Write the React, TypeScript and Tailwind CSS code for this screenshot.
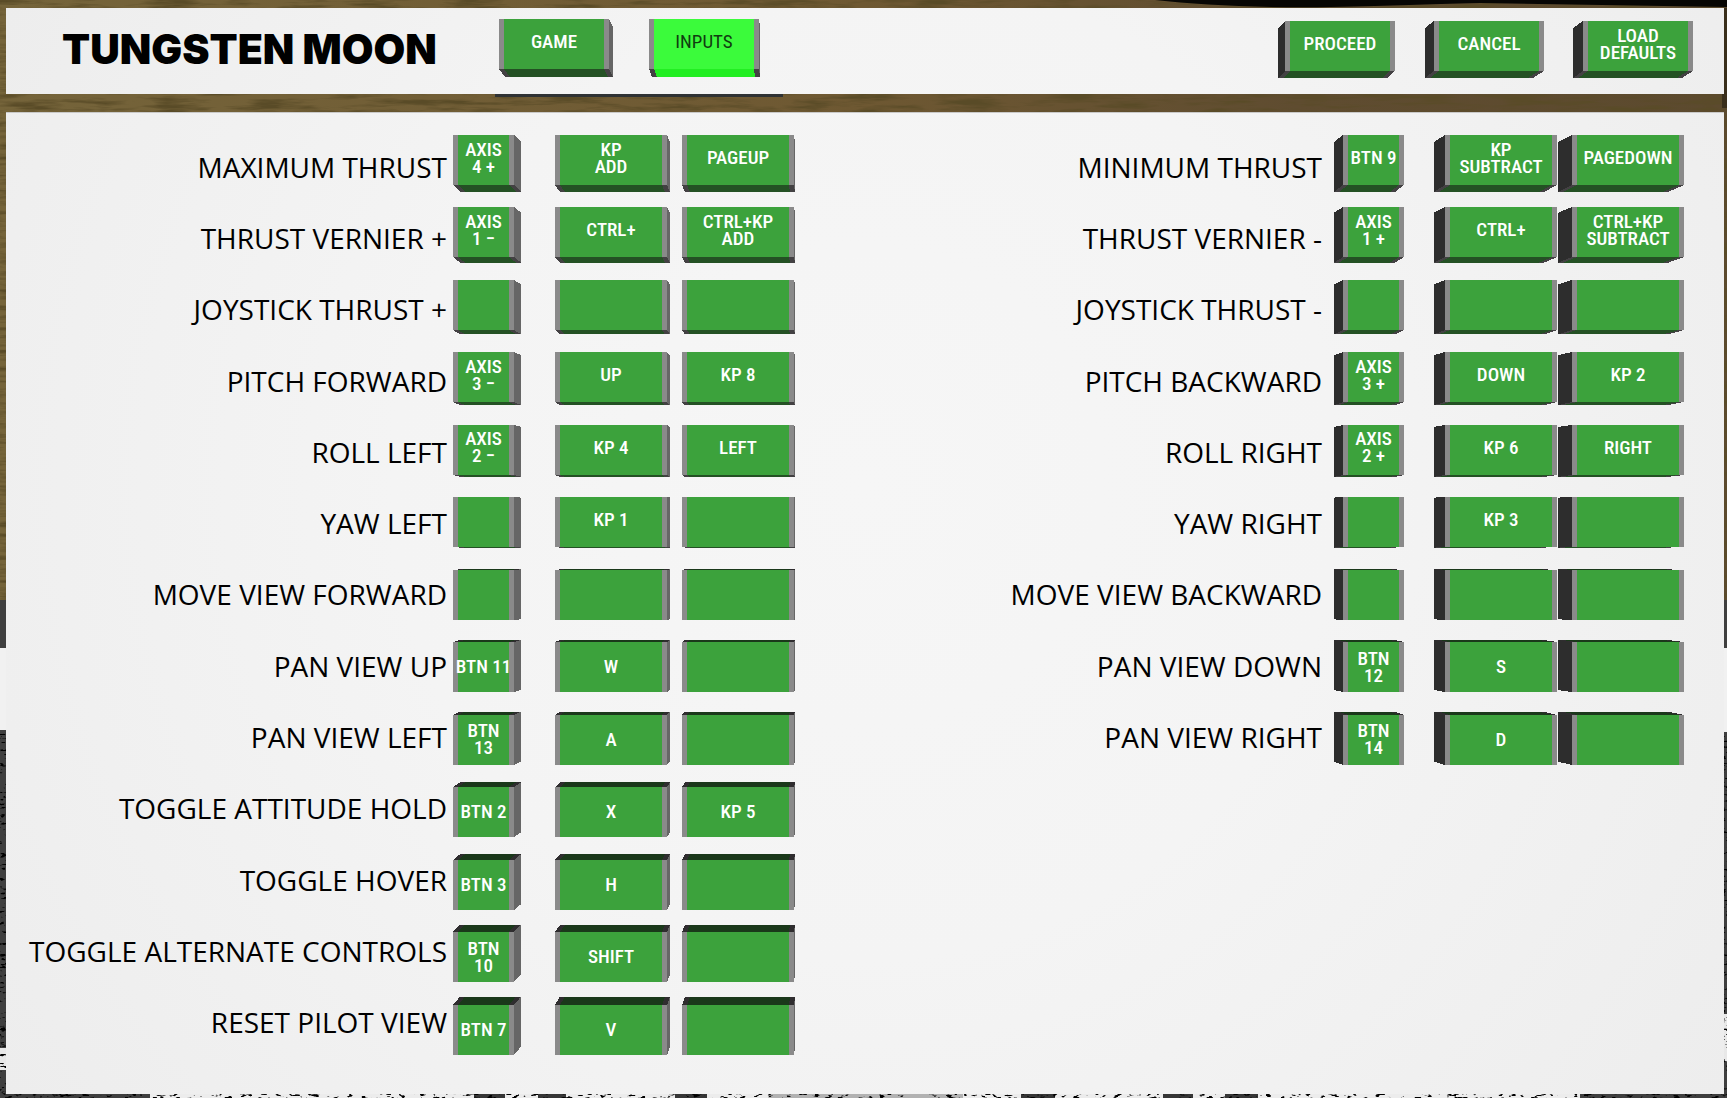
type Rake = { left: number; right: number };

type KeycapProps = {
  text: string;
  width: 61 | 110 | 112;
  rake: Rake;
  drop: number;
  active?: boolean;
  labelledBy?: string;
};

const WIDTH_CLASS = {
  61: "w-[61px]",
  110: "w-[110px]",
  112: "w-[112px]",
};

const FACE_HEIGHT = 50;
const BEVEL = 5;

function quad(...points: [number, number][]) {
  return points.map((p) => p.join(",")).join(" ");
}

/* The sides of the raised key that stay visible behind its front face. */
function KeySides({ width, rake, drop, active }: { width: number; rake: Rake; drop: number; active: boolean }) {
  const w = width;
  const h = FACE_HEIGHT;
  const bl = rake.left;
  const br = w + rake.right;
  const bt = drop;
  const bb = h + drop;
  const edge = drop > 0 ? h : 0;
  const backEdge = drop > 0 ? bb : bt;
  return (
    <svg
      className="pointer-events-none absolute inset-0 size-full overflow-visible"
      viewBox={`0 0 ${w} ${h}`}
      shapeRendering="crispEdges"
      aria-hidden="true"
    >
      {rake.left > 0 ? (
        <polygon points={quad([w, 0], [br, bt], [br, bb], [w, h])} fill="#666666" />
      ) : (
        <polygon points={quad([0, 0], [bl, bt], [bl, bb], [0, h])} fill="#2d2d2d" />
      )}
      <polygon
        points={quad([0, edge], [w, edge], [br, backEdge], [bl, backEdge])}
        fill={drop > 0 ? "#434143" : "#2f2d2f"}
      />
      <polygon
        points={quad([BEVEL, edge], [w - BEVEL, edge], [br - BEVEL, backEdge], [bl + BEVEL, backEdge])}
        fill={active ? "#22ee22" : drop > 0 ? "#245124" : "#1a381a"}
      />
    </svg>
  );
}

function Keycap({ text, width, rake, drop, active = false, labelledBy }: KeycapProps) {
  return (
    <button
      type="button"
      aria-labelledby={labelledBy}
      aria-pressed={active || undefined}
      className={`relative h-[50px] shrink-0 cursor-pointer ${WIDTH_CLASS[width]}`}
    >
      <KeySides width={width} rake={rake} drop={drop} active={active} />
      <span
        className={`relative flex h-full items-center justify-center border-x-[5px] border-[#8a8a8a] text-center font-['Roboto_Condensed',Roboto,sans-serif] text-[19px] leading-[17px] whitespace-pre ${
          active ? "bg-[#3bfb3b] font-normal text-[#103c10]" : "bg-[#3ca23c] font-medium text-white"
        } ${drop > 0 ? "pb-[5px]" : "pb-px"}`}
      >
        {text}
      </span>
    </button>
  );
}

type Binding = { label: string; keys: [string, string, string] };

const PRIMARY: Binding[] = [
  { label: "MAXIMUM THRUST", keys: ["AXIS\n4 +", "KP\nADD", "PAGEUP"] },
  { label: "THRUST VERNIER +", keys: ["AXIS\n1 −", "CTRL+", "CTRL+KP\nADD"] },
  { label: "JOYSTICK THRUST +", keys: ["", "", ""] },
  { label: "PITCH FORWARD", keys: ["AXIS\n3 −", "UP", "KP 8"] },
  { label: "ROLL LEFT", keys: ["AXIS\n2 −", "KP 4", "LEFT"] },
  { label: "YAW LEFT", keys: ["", "KP 1", ""] },
  { label: "MOVE VIEW FORWARD", keys: ["", "", ""] },
  { label: "PAN VIEW UP", keys: ["BTN 11", "W", ""] },
  { label: "PAN VIEW LEFT", keys: ["BTN\n13", "A", ""] },
  { label: "TOGGLE ATTITUDE HOLD", keys: ["BTN 2", "X", "KP 5"] },
  { label: "TOGGLE HOVER", keys: ["BTN 3", "H", ""] },
  { label: "TOGGLE ALTERNATE CONTROLS", keys: ["BTN\n10", "SHIFT", ""] },
  { label: "RESET PILOT VIEW", keys: ["BTN 7", "V", ""] },
];

const OPPOSITE: Binding[] = [
  { label: "MINIMUM THRUST", keys: ["BTN 9", "KP\nSUBTRACT", "PAGEDOWN"] },
  { label: "THRUST VERNIER -", keys: ["AXIS\n1 +", "CTRL+", "CTRL+KP\nSUBTRACT"] },
  { label: "JOYSTICK THRUST -", keys: ["", "", ""] },
  { label: "PITCH BACKWARD", keys: ["AXIS\n3 +", "DOWN", "KP 2"] },
  { label: "ROLL RIGHT", keys: ["AXIS\n2 +", "KP 6", "RIGHT"] },
  { label: "YAW RIGHT", keys: ["", "KP 3", ""] },
  { label: "MOVE VIEW BACKWARD", keys: ["", "", ""] },
  { label: "PAN VIEW DOWN", keys: ["BTN\n12", "S", ""] },
  { label: "PAN VIEW RIGHT", keys: ["BTN\n14", "D", ""] },
];

const PRIMARY_RAKES: Rake[] = [
  { left: 7, right: 7 },
  { left: 5, right: 3 },
  { left: 3, right: 1 },
];

const OPPOSITE_RAKES: Rake[] = [
  { left: -9, right: -9 },
  { left: -11, right: -13 },
  { left: -14, right: -16 },
];

/* Keys lean towards the vanishing point, so the lower rows show their top side. */
function rowDrop(row: number) {
  return 7 - 1.28 * row;
}

function BindingGroup({
  id,
  bindings,
  rakes,
  gapClass,
  labelClass,
}: {
  id: string;
  bindings: Binding[];
  rakes: Rake[];
  gapClass: string;
  labelClass: string;
}) {
  return (
    <section className={`flex ${gapClass}`}>
      <div
        className={`mt-[18px] mb-9 grid grid-rows-[repeat(13,minmax(60px,1fr))] items-center text-right font-['Open_Sans','Noto_Sans',sans-serif] text-[28px] leading-9 font-[450] whitespace-nowrap text-black ${labelClass}`}
      >
        {bindings.map((b, row) => (
          <span key={b.label} id={`${id}-${row}`}>
            {b.label}
          </span>
        ))}
      </div>
      <div className="mt-[22px] mb-[17px] grid grid-cols-[102px_127px_112px] grid-rows-[repeat(13,minmax(60px,1fr))] items-start">
        {bindings.map((b, row) =>
          b.keys.map((text, col) => (
            <Keycap
              key={`${row}-${col}`}
              text={text}
              width={col === 0 ? 61 : 112}
              rake={rakes[col]}
              drop={rowDrop(row)}
              labelledBy={`${id}-${row}`}
            />
          )),
        )}
      </div>
    </section>
  );
}

type Patch = [x: number, y: number, w: number, h: number, fill: string];

const GROUND: Patch[] = [
  [0, 600, 1727, 498, "#3f3f3f"],
  [0, 648, 6, 82, "#f1f1f1"],
  [1721, 648, 6, 84, "#f1f1f1"],
  [0, 1048, 6, 22, "#e8e8e8"],
  [1721, 1014, 6, 48, "#e8e8e8"],
  [150, 1090, 1430, 8, "#ececec"],
  [474, 1090, 31, 8, "#363636"],
  [538, 1090, 28, 8, "#363636"],
  [675, 1090, 32, 8, "#363636"],
  [769, 1090, 194, 8, "#b2b2b2"],
  [1021, 1090, 34, 8, "#363636"],
  [1163, 1090, 30, 8, "#363636"],
  [1225, 1090, 33, 8, "#363636"],
];

function Terrain() {
  return (
    <svg
      className="absolute inset-0 size-full"
      viewBox="0 0 1727 1098"
      preserveAspectRatio="none"
      aria-hidden="true"
    >
      <defs>
        <linearGradient id="soil">
          <stop offset="0" stopColor="#75643a" />
          <stop offset="0.5" stopColor="#6e5832" />
          <stop offset="0.75" stopColor="#5f4c30" />
          <stop offset="1" stopColor="#5c4a2e" />
        </linearGradient>
        <filter id="grain" x="0" y="0" width="1" height="1">
          <feTurbulence type="fractalNoise" baseFrequency="0.02 0.18" numOctaves="4" seed="4" />
          <feColorMatrix values="0 0 0 0 0.1  0 0 0 0 0.07  0 0 0 0 0.02  3 0 0 0 -1.3" />
        </filter>
        <filter id="grit" x="0" y="0" width="1" height="1">
          <feTurbulence type="fractalNoise" baseFrequency="0.15 0.35" numOctaves="2" seed="9" />
          <feColorMatrix values="0 0 0 0 0  0 0 0 0 0  0 0 0 0 0  9 0 0 0 -5.2" />
        </filter>
      </defs>
      <rect width="1727" height="600" fill="url(#soil)" />
      <rect width="1727" height="600" filter="url(#grain)" />
      <path d="M1155 0C1200 5 1260 8 1330 7S1420 4 1480 3L1727 7V0Z" fill="#070604" />
      <path d="M1722 8h5v100h-5z" fill="#3a2f1c" />
      {GROUND.map(([x, y, w, h, fill]) => (
        <rect key={`${x}-${y}-${w}`} x={x} y={y} width={w} height={h} fill={fill} />
      ))}
      <rect y="732" width="1727" height="366" filter="url(#grit)" />
    </svg>
  );
}

export default function App() {
  return (
    <div className="relative isolate flex min-h-screen min-w-[1500px] flex-col bg-[#5b492a] pt-2 pr-[3px] pb-1 pl-1.5">
      <Terrain />
      <header className="relative flex h-[86px] items-start justify-between bg-[radial-gradient(circle_at_52%_480%,#f6f6f6_0%,#f4f4f4_45%,#ededed_100%)] pr-[31px] pl-14">
        <div className="flex self-stretch">
          <h1 className="w-[437px] self-center pb-[3px] font-['Inter',sans-serif] text-[41px] leading-none font-black whitespace-nowrap text-black">
            TUNGSTEN MOON
          </h1>
          <nav className="relative flex gap-10 pt-[11px]" aria-label="Settings pages">
            <Keycap text="GAME" width={110} rake={{ left: 6, right: 4 }} drop={8} />
            <Keycap text="INPUTS" width={110} rake={{ left: 3, right: 1 }} drop={8} active />
            <span className="absolute top-full -left-1 h-[3px] w-72 bg-[#2f3234]" />
          </nav>
        </div>
        <div className="flex gap-[39px] pt-[13px]">
          <Keycap text="PROCEED" width={110} rake={{ left: -7, right: -8 }} drop={7} />
          <Keycap text="CANCEL" width={110} rake={{ left: -9, right: -11 }} drop={7} />
          <Keycap text={"LOAD\nDEFAULTS"} width={110} rake={{ left: -10, right: -11 }} drop={7} />
        </div>
      </header>
      <main className="relative mt-[18px] flex flex-1 justify-between border-t border-[#c9c9c9] bg-[radial-gradient(circle_at_50%_38%,#f6f6f6_0%,#f4f4f4_45%,#ededed_100%)] pr-10 pl-5">
        <BindingGroup
          id="primary"
          bindings={PRIMARY}
          rakes={PRIMARY_RAKES}
          gapClass="gap-1.5"
          labelClass="min-w-[421px]"
        />
        <BindingGroup
          id="opposite"
          bindings={OPPOSITE}
          rakes={OPPOSITE_RAKES}
          gapClass="gap-[21px]"
          labelClass="min-w-0"
        />
      </main>
    </div>
  );
}
